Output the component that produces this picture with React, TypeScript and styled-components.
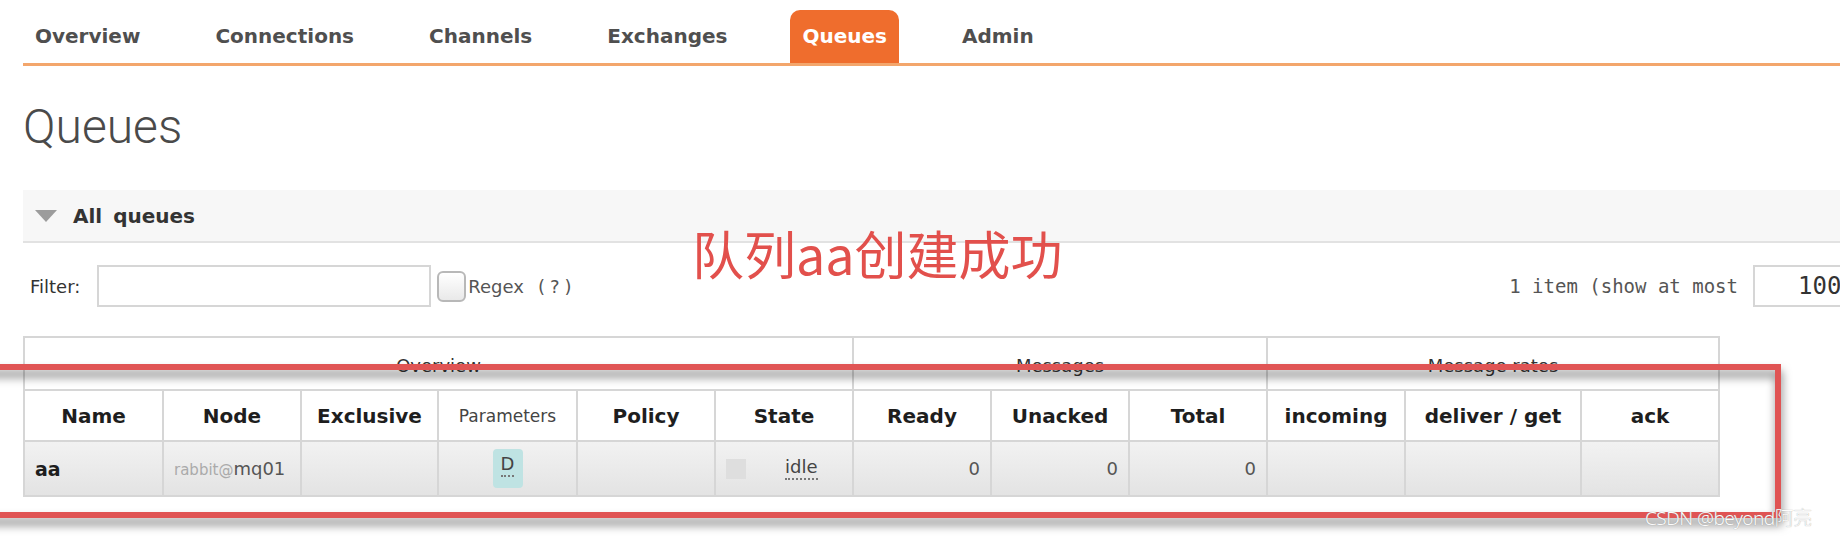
import React from "react";
import styled, { createGlobalStyle } from "styled-components";

const GlobalStyle = createGlobalStyle`
  html, body {
    margin: 0;
    padding: 0;
    background: #fff;
    overflow: hidden;
  }
  body {
    font-family: "DejaVu Sans", Verdana, sans-serif;
    color: #333;
  }
`;

const Page = styled.div`
  position: relative;
  width: 1880px;
  height: 538px;
  padding-left: 23px;
  box-sizing: border-box;
`;

const Nav = styled.nav`
  display: flex;
  gap: 51px;
  padding-top: 10px;
  border-bottom: 3px solid #f3a66c;
`;

const NavLink = styled.a<{ $active?: boolean }>`
  display: block;
  height: 53px;
  line-height: 53px;
  padding: 0 12px;
  font-size: 20px;
  font-weight: bold;
  text-decoration: none;
  color: ${({ $active }) => ($active ? "#fff" : "#4f4f4f")};
  background: ${({ $active }) => ($active ? "#ef6d2d" : "transparent")};
  border-radius: 10px 10px 0 0;
`;

const Title = styled.h1`
  margin: 37px 0 0;
  font-family: Roboto, "Liberation Sans", sans-serif;
  font-weight: 300;
  font-size: 48px;
  line-height: 1;
  color: #4a4a4a;
`;

const SectionBar = styled.div`
  margin-top: 39px;
  height: 51px;
  display: flex;
  align-items: center;
  gap: 16px;
  padding-left: 12px;
  background: #f7f7f7;
  border-bottom: 2px solid #e2e2e2;
`;

const Caret = styled.span`
  width: 0;
  height: 0;
  border-left: 11px solid transparent;
  border-right: 11px solid transparent;
  border-top: 12px solid #9c9c9c;
`;

const SectionTitle = styled.span`
  font-size: 20px;
  font-weight: bold;
  color: #333;
  word-spacing: 4px;
`;

const FilterRow = styled.div`
  margin-top: 22px;
  height: 42px;
  display: flex;
  align-items: center;
  padding-left: 7px;
`;

const Label = styled.span`
  font-size: 18px;
  color: #333;
`;

const TextInput = styled.input<{ $width: number; $indent?: number }>`
  box-sizing: border-box;
  width: ${({ $width }) => $width}px;
  height: 42px;
  margin-left: 17px;
  padding: 0 0 0 ${({ $indent }) => $indent ?? 6}px;
  border: 2px solid #d6d6d6;
  background: #fff;
  font-family: "DejaVu Sans Mono", "Liberation Mono", monospace;
  font-size: 24px;
  color: #333;
  outline: none;
`;

const CheckBox = styled.span`
  box-sizing: border-box;
  width: 29px;
  height: 31px;
  margin-left: 6px;
  border: 2px solid #b8b8b8;
  border-radius: 6px;
  background: linear-gradient(#fff, #e9e9e9);
`;

const RegexLabel = styled.span`
  margin-left: 2px;
  font-size: 18px;
  color: #555;
`;

const Help = styled.span`
  margin-left: 14px;
  letter-spacing: 5px;
`;

const Paging = styled.div`
  margin-left: auto;
  display: flex;
  align-items: center;
  gap: 15px;
  font-family: "DejaVu Sans Mono", "Liberation Mono", monospace;
  font-size: 19px;
  color: #555;

  ${TextInput} {
    margin-left: 0;
  }
`;

const Table = styled.table`
  margin-top: 29px;
  width: 1695px;
  table-layout: fixed;
  border-collapse: collapse;
  font-size: 18px;
  color: #333;
`;

const GroupCell = styled.th`
  height: 38px;
  padding: 0 0 13px;
  border: 2px solid #d6d6d6;
  vertical-align: bottom;
  font-weight: normal;
  font-size: 18px;
  line-height: 20px;
  background: #fff;
`;

const HeadCell = styled.th<{ $plain?: boolean }>`
  height: 49px;
  padding: 0;
  border: 2px solid #d6d6d6;
  background: #fff;
  font-size: ${({ $plain }) => ($plain ? "17px" : "20px")};
  font-weight: ${({ $plain }) => ($plain ? "normal" : "bold")};
  color: ${({ $plain }) => ($plain ? "#444" : "#1e1e1e")};
`;

const DataRow = styled.tr`
  background: linear-gradient(#f2f2f2, #e3e3e3);
`;

const Cell = styled.td<{ $align?: "left" | "center" | "right" }>`
  height: 53px;
  padding: 0 10px;
  border: 2px solid #d6d6d6;
  text-align: ${({ $align }) => $align ?? "left"};
  color: #555;
`;

const QueueName = styled.span`
  font-weight: bold;
  font-size: 19px;
  color: #1e1e1e;
`;

const Host = styled.span`
  font-size: 15px;
  color: #aaa;
`;

const NodeName = styled.span`
  font-size: 18px;
  color: #555;
`;

const Badge = styled.span`
  display: inline-flex;
  align-items: flex-start;
  justify-content: center;
  width: 30px;
  height: 39px;
  padding-top: 5px;
  box-sizing: border-box;
  border-radius: 4px;
  background: #bfe3e3;
  vertical-align: middle;
`;

const Abbr = styled.abbr`
  text-decoration: none;
  border-bottom: 2px dotted #777;
  line-height: 1.15;
  font-size: 18px;
  color: #444;
`;

const StateCell = styled.div`
  display: flex;
  align-items: center;
`;

const StatusDot = styled.span`
  width: 20px;
  height: 20px;
  background: #dedede;
  margin-right: 39px;
`;

const Annotation = styled.div`
  position: absolute;
  left: 692px;
  top: 222px;
  font-family: "Noto Sans CJK SC", "Noto Sans", sans-serif;
  font-weight: 400;
  font-size: 52px;
  line-height: 1.2;
  color: #e2504c;
  white-space: nowrap;
`;

const Highlight = styled.div`
  position: absolute;
  left: -20px;
  top: 364px;
  width: 1801px;
  height: 154px;
  box-sizing: border-box;
  border: 6px solid #e05454;
  filter: drop-shadow(1px 7px 5px rgba(0, 0, 0, 0.5));
  pointer-events: none;
`;

const Watermark = styled.div`
  position: absolute;
  left: 1645px;
  top: 503px;
  font-family: "Noto Sans", "Noto Sans CJK SC", sans-serif;
  font-size: 19px;
  font-weight: 300;
  letter-spacing: -0.5px;
  color: #fcfcfc;
  text-shadow: 0 0 1px #8a8a8a;
  white-space: nowrap;
`;

const tabs = ["Overview", "Connections", "Channels", "Exchanges", "Queues", "Admin"];

const columns = [139, 138, 137, 139, 138, 138, 138, 138, 138, 138, 176, 138];

export default function App() {
  return (
    <>
      <GlobalStyle />
      <Page>
        <Nav>
          {tabs.map((t) => (
            <NavLink key={t} $active={t === "Queues"}>
              {t}
            </NavLink>
          ))}
        </Nav>

        <Title>Queues</Title>

        <SectionBar>
          <Caret />
          <SectionTitle>All queues</SectionTitle>
        </SectionBar>

        <FilterRow>
          <Label>Filter:</Label>
          <TextInput $width={334} defaultValue="" />
          <CheckBox />
          <RegexLabel>
            Regex<Help>(?)</Help>
          </RegexLabel>
          <Paging>
            <span>1 item (show at most</span>
            <TextInput $width={127} $indent={43} defaultValue="100" />
          </Paging>
        </FilterRow>

        <Table>
          <colgroup>
            {columns.map((w, i) => (
              <col key={i} style={{ width: w }} />
            ))}
          </colgroup>
          <thead>
            <tr>
              <GroupCell colSpan={6}>Overview</GroupCell>
              <GroupCell colSpan={3}>Messages</GroupCell>
              <GroupCell colSpan={3}>Message rates</GroupCell>
            </tr>
            <tr>
              <HeadCell>Name</HeadCell>
              <HeadCell>Node</HeadCell>
              <HeadCell>Exclusive</HeadCell>
              <HeadCell $plain>Parameters</HeadCell>
              <HeadCell>Policy</HeadCell>
              <HeadCell>State</HeadCell>
              <HeadCell>Ready</HeadCell>
              <HeadCell>Unacked</HeadCell>
              <HeadCell>Total</HeadCell>
              <HeadCell>incoming</HeadCell>
              <HeadCell>deliver / get</HeadCell>
              <HeadCell>ack</HeadCell>
            </tr>
          </thead>
          <tbody>
            <DataRow>
              <Cell>
                <QueueName>aa</QueueName>
              </Cell>
              <Cell>
                <Host>rabbit@</Host>
                <NodeName>mq01</NodeName>
              </Cell>
              <Cell />
              <Cell $align="center">
                <Badge>
                  <Abbr title="durable">D</Abbr>
                </Badge>
              </Cell>
              <Cell />
              <Cell>
                <StateCell>
                  <StatusDot />
                  <Abbr title="idle">idle</Abbr>
                </StateCell>
              </Cell>
              <Cell $align="right">0</Cell>
              <Cell $align="right">0</Cell>
              <Cell $align="right">0</Cell>
              <Cell />
              <Cell />
              <Cell />
            </DataRow>
          </tbody>
        </Table>

        <Annotation>队列aa创建成功</Annotation>
        <Highlight />
        <Watermark>CSDN @beyond阿亮</Watermark>
      </Page>
    </>
  );
}
